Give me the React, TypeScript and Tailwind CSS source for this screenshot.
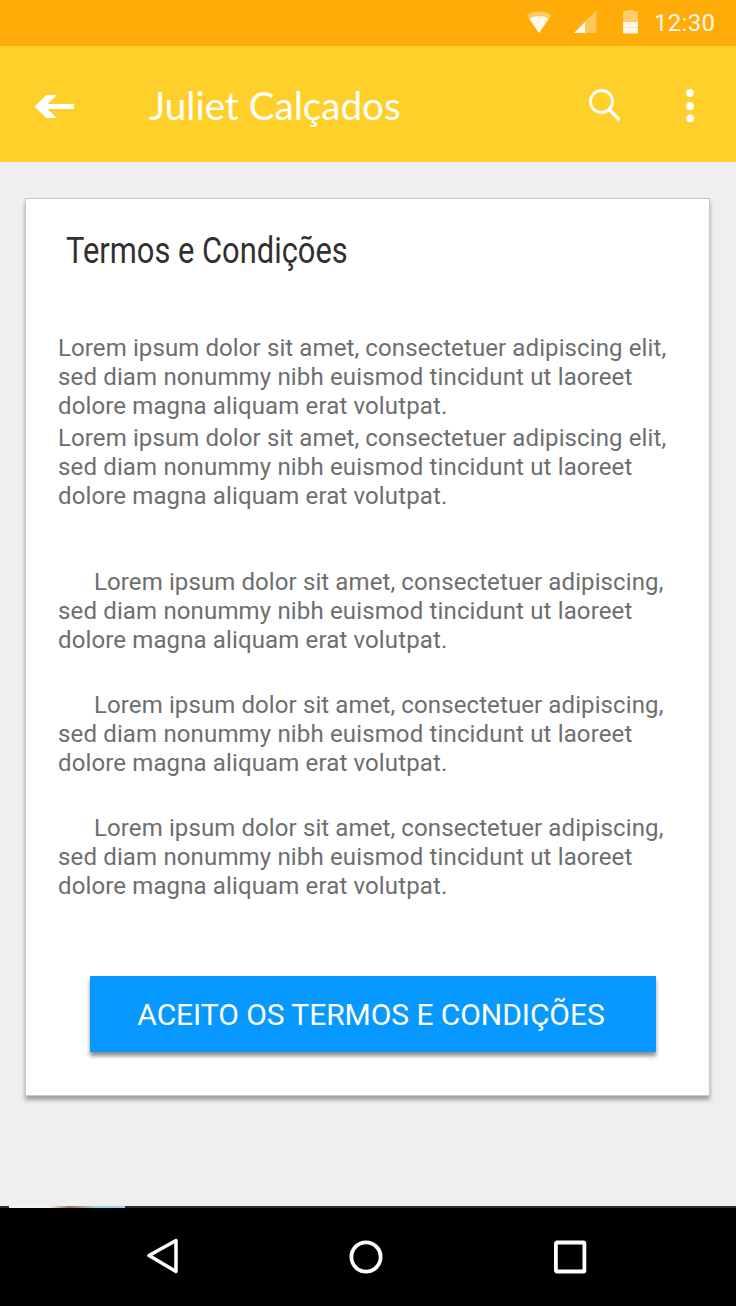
const paragraphs = [
  { first: 'Lorem ipsum dolor sit amet, consectetuer adipiscing elit,', style: '' },
  { first: 'Lorem ipsum dolor sit amet, consectetuer adipiscing elit,', style: 'mt-[3px]' },
  { first: 'Lorem ipsum dolor sit amet, consectetuer adipiscing,', style: 'mt-[57px] indent-9' },
  { first: 'Lorem ipsum dolor sit amet, consectetuer adipiscing,', style: 'mt-9 indent-9' },
  { first: 'Lorem ipsum dolor sit amet, consectetuer adipiscing,', style: 'mt-9 indent-9' },
];

function StatusBar() {
  return (
    <div className="flex h-[46px] items-center bg-[#ffab08] pl-[526px] text-white">
      <svg className="h-6 w-[27px]" viewBox="0 0 27 24">
        <path d="M.5 4.500C7-.8 19-.8 25.500 4.500L13 22Z" fill="#fff" opacity=".38" />
        <path d="M3.500 8C9 4 17 4 22.500 8L13 22Z" fill="#fff" opacity=".88" />
      </svg>
      <svg className="ml-5 h-6 w-6" viewBox="0 0 24 24">
        <path d="M1 22L23.500 -1V22Z" fill="#fff" opacity=".35" />
        <path d="M1 22L12 11V22Z" fill="#fff" opacity=".88" />
      </svg>
      <svg className="ml-[25px] h-[26px] w-[18px]" viewBox="0 0 18 26">
        <path d="M1 12V2.500Q1 1 2.500 1H5V0H12V1H14.500Q16 1 16 2.500V12Z" fill="#fff" opacity=".4" />
        <path d="M1 12H16V22.500Q16 23.500 15 23.500H2Q1 23.500 1 22.500Z" fill="#fff" opacity=".92" />
        <path d="M1 17.500H16" stroke="#ffab08" strokeWidth=".5" opacity=".5" />
      </svg>
      <span className="ml-[14px] text-2xl leading-6 font-normal tracking-[0.3px] text-white/90">12:30</span>
    </div>
  );
}

function AppBar() {
  return (
    <header className="flex h-[116px] items-center bg-[#ffd029] pt-1 pl-[35px] text-white">
      <svg className="mt-0.5 h-6 w-10" viewBox="0 0 40 24" fill="#fff">
        <path d="M0 11L11.500 0H22L12.500 9H39V14H12.500L22 23H11.500L0 12Z" />
      </svg>
      <h1 className="mb-[3px] ml-[74px] w-[439px] font-[Lato,sans-serif] text-[39px] leading-[48px] font-normal">
        <span className="inline-block origin-left scale-x-[0.99]">Juliet Calçados</span>
      </h1>
      <svg className="-ml-px h-9 w-9 shrink-0" viewBox="0 0 36 36" fill="none" stroke="#fff">
        <circle cx="14.500" cy="13.500" r="11" strokeWidth="2.800" />
        <path d="M22.300 21.500L31.500 31" strokeWidth="3.500" strokeLinecap="round" />
      </svg>
      <svg className="ml-[61px] h-9 w-3 shrink-0" viewBox="0 0 12 36" fill="#fff">
        <circle cx="6" cy="5" r="3.900" />
        <circle cx="6" cy="18" r="3.900" />
        <circle cx="6" cy="30.300" r="3.900" />
      </svg>
    </header>
  );
}

function TermsCard() {
  return (
    <section className="mt-9 ml-[25px] flex h-[898px] w-[685px] flex-col border border-[#c8c8c8] bg-white shadow-[0_4px_4px_rgba(0,0,0,0.33)]">
      <h2 className="mt-[30px] ml-[40px] h-[44px] text-[37px] leading-[44px] whitespace-nowrap text-[#303030]">
        <span className="inline-block origin-left scale-x-[0.834]">Termos e Condições</span>
      </h2>
      <div className="mt-[61px] ml-8 text-2xl leading-[29px] tracking-[0.13px] whitespace-nowrap text-[#6e6e6e]">
        {paragraphs.map((p, i) => (
          <p key={i} className={p.style}>
            <span className="tracking-[0.105px]">{p.first}</span>
            <br />
            <span className="tracking-[0.15px]">sed diam nonummy nibh euismod tincidunt ut laoreet</span>
            <br />
            dolore magna aliquam erat volutpat.
          </p>
        ))}
      </div>
      <button className="mt-[75px] ml-16 flex h-[76px] w-[566px] items-center justify-center bg-[#0799ff] pr-1 text-[30px] tracking-[-0.06px] whitespace-nowrap text-white shadow-[0_4px_4px_rgba(0,0,0,0.45)]">
        ACEITO OS TERMOS E CONDIÇÕES
      </button>
    </section>
  );
}

function NavigationBar() {
  return (
    <nav className="h-[100px] bg-black">
      <div className="flex h-0.5 bg-[#2c2d30] pl-[9px]">
        <div className="w-[116px] bg-linear-to-r from-[#f0f5ea] from-35% via-[#a86a48] via-52% to-[#8fd6df] to-75%" />
      </div>
      <div className="flex h-[98px] items-center pl-[145px]">
        <svg className="h-10 w-9" viewBox="0 0 36 40" fill="none" stroke="#fff" strokeWidth="3.500">
          <path d="M4 18.500L31 3.500V34.500Z" strokeLinejoin="round" />
        </svg>
        <svg className="ml-[167px] h-9 w-9" viewBox="0 0 36 36" fill="none" stroke="#fff">
          <circle cx="18" cy="18" r="14.600" strokeWidth="3.800" />
        </svg>
        <svg className="ml-[168px] h-9 w-9" viewBox="0 0 36 36" fill="none" stroke="#fff">
          <rect x="3.900" y="3.500" width="28.500" height="29" rx="1" strokeWidth="3.800" />
        </svg>
      </div>
    </nav>
  );
}

export default function App() {
  return (
    <div className="flex h-[1306px] w-[736px] flex-col justify-between overflow-hidden bg-[#efefef] font-[Roboto,sans-serif]">
      <main>
        <StatusBar />
        <AppBar />
        <TermsCard />
      </main>
      <NavigationBar />
    </div>
  );
}
